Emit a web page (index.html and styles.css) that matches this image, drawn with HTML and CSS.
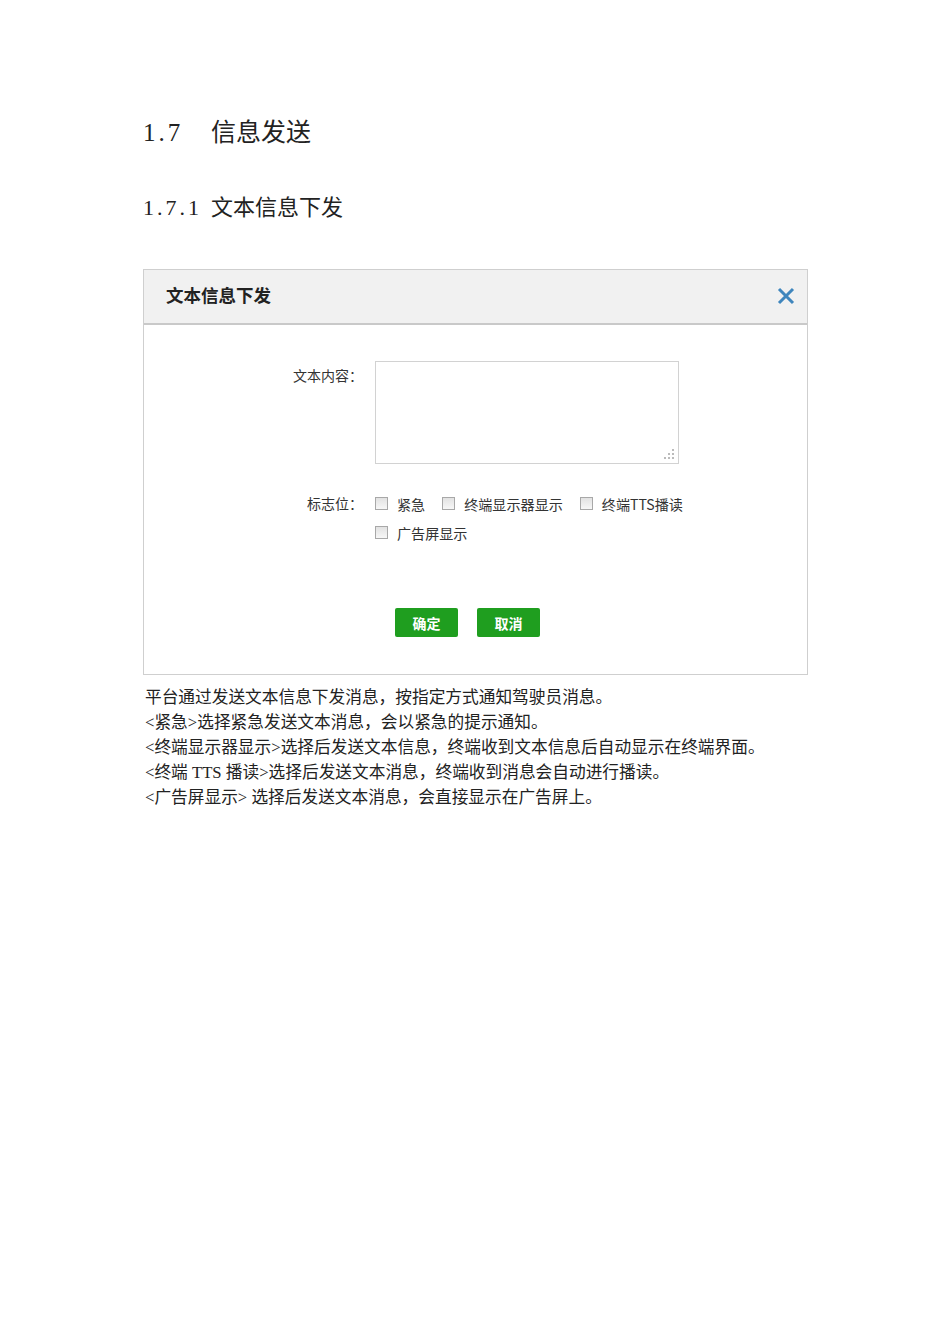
FILE: index.html
```html
<!DOCTYPE html>
<html lang="zh-CN">

<head>
    <meta charset="utf-8">
    <title>信息发送</title>
    <link rel="stylesheet" href="styles.css">
</head>

<body>
    <div class="doc">
        <h1 class="h1"><span class="num">1.7</span>信息发送</h1>
        <h2 class="h2"><span class="num2">1.7.1</span>文本信息下发</h2>

        <div class="dialog">
            <div class="dialog-head">
                <span class="dialog-title">文本信息下发</span>
                <svg class="close" width="18" height="18" viewBox="0 0 18 18">
                    <path d="M2 2 L16 16 M16 2 L2 16" stroke="#3f86bd" stroke-width="3" stroke-linecap="butt" fill="none"/>
                </svg>
            </div>
            <div class="dialog-body">
                <div class="row">
                    <label class="label">文本内容：</label>
                    <div class="textarea">
                        <svg class="grip" width="10" height="10" viewBox="0 0 10 10">
                            <rect x="8" y="0" width="2" height="2" fill="#bbb"/>
                            <rect x="4" y="4" width="2" height="2" fill="#bbb"/>
                            <rect x="8" y="4" width="2" height="2" fill="#bbb"/>
                            <rect x="0" y="8" width="2" height="2" fill="#bbb"/>
                            <rect x="4" y="8" width="2" height="2" fill="#bbb"/>
                            <rect x="8" y="8" width="2" height="2" fill="#bbb"/>
                        </svg>
                    </div>
                </div>
                <div class="row flags">
                    <label class="label">标志位：</label>
                    <div class="checks">
                        <label class="check"><span class="box"></span>紧急</label>
                        <label class="check"><span class="box"></span>终端显示器显示</label>
                        <label class="check"><span class="box"></span>终端TTS播读</label>
                        <label class="check"><span class="box"></span>广告屏显示</label>
                    </div>
                </div>
                <div class="actions">
                    <button class="btn">确定</button>
                    <button class="btn">取消</button>
                </div>
            </div>
        </div>

        <div class="desc">
            <p>平台通过发送文本信息下发消息，按指定方式通知驾驶员消息。</p>
            <p>&lt;紧急&gt;选择紧急发送文本消息，会以紧急的提示通知。</p>
            <p>&lt;终端显示器显示&gt;选择后发送文本信息，终端收到文本信息后自动显示在终端界面。</p>
            <p>&lt;终端 TTS 播读&gt;选择后发送文本消息，终端收到消息会自动进行播读。</p>
            <p>&lt;广告屏显示&gt; 选择后发送文本消息，会直接显示在广告屏上。</p>
        </div>
    </div>
</body>

</html>
```

FILE: styles.css
```css
body {
    margin: 0;
    padding: 0;
    background-color: #fff;
    color: #222;
    font-family: "Liberation Serif", "Noto Sans CJK SC", serif;
}

.doc {
    padding: 118px 0 0 143px;
    width: 665px;
}

.h1 {
    margin: 0;
    font-size: 25px;
    line-height: 30px;
    font-weight: normal;
    color: #222;
}

.num {
    display: inline-block;
    width: 68px;
    letter-spacing: 3px;
}

.h2 {
    margin: 45px 0 0 0;
    font-size: 22px;
    line-height: 30px;
    font-weight: normal;
    color: #222;
}

.num2 {
    display: inline-block;
    width: 68px;
    letter-spacing: 3px;
}

.dialog {
    margin-top: 46px;
    border: 1px solid #cfcfcf;
    background-color: #fff;
    font-family: "Noto Sans CJK SC", "Liberation Sans", sans-serif;
}

.dialog-head {
    height: 55px;
    box-sizing: border-box;
    display: flex;
    align-items: center;
    justify-content: space-between;
    padding: 0 12px 4px 22px;
    background-color: #f1f1f1;
    border-bottom: 2px solid #c9c9c9;
}

.dialog-title {
    font-size: 17.5px;
    font-weight: bold;
    color: #222;
}

.close {
    display: block;
    margin-top: 3px;
}

.dialog-body {
    padding: 36px 0 37px 0;
}

.row {
    display: flex;
    align-items: flex-start;
}

.label {
    width: 219px;
    text-align: right;
    padding-right: 12px;
    font-size: 14px;
    line-height: 29px;
    color: #333;
}

.textarea {
    position: relative;
    width: 302px;
    height: 101px;
    border: 1px solid #d2d2d2;
    background-color: #fff;
}

.grip {
    position: absolute;
    right: 4px;
    bottom: 4px;
}

.flags {
    margin-top: 25px;
}

.checks {
    display: flex;
    flex-wrap: wrap;
    width: 330px;
}

.check {
    display: flex;
    align-items: center;
    height: 29px;
    margin-right: 17px;
    font-size: 14.1px;
    color: #333;
}

.box {
    width: 11px;
    height: 11px;
    margin-right: 9px;
    border: 1px solid #a8a8a8;
    background: linear-gradient(#e2e2e2, #f7f7f7);
}

.actions {
    display: flex;
    justify-content: center;
    gap: 19px;
    margin-top: 61px;
    padding-right: 16px;
}

.btn {
    width: 63px;
    height: 29px;
    border: none;
    border-radius: 2px;
    background-color: #1f9e1f;
    color: #fff;
    font-family: "Noto Sans CJK SC", sans-serif;
    font-size: 14px;
    font-weight: bold;
    cursor: pointer;
}

.desc {
    margin-top: 10px;
    font-size: 16.7px;
    line-height: 25px;
    color: #222;
}

.desc p {
    margin: 0;
    padding-left: 2px;
}
```
